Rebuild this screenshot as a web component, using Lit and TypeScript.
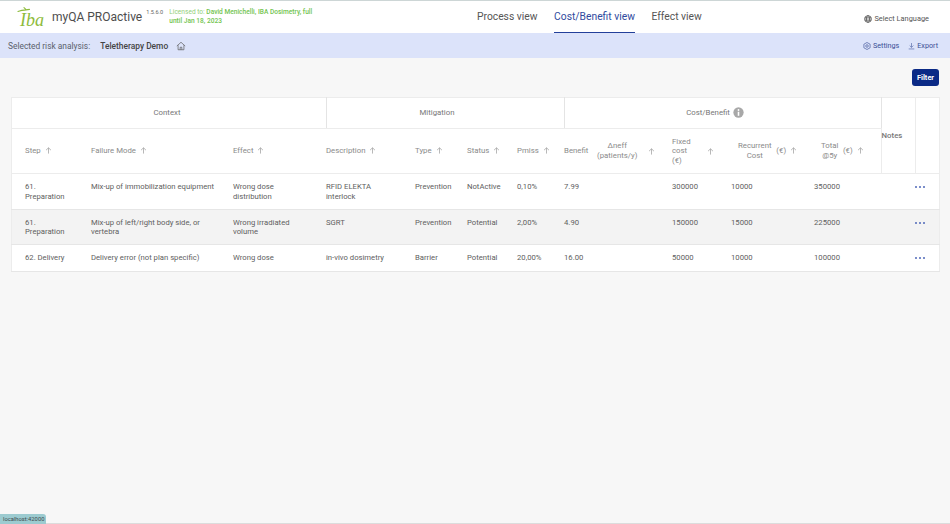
import { LitElement, html, css } from "lit";
import { customElement } from "lit/decorators.js";

const rows = [
  ["61. Preparation", "Mix-up of immobilization equipment", "Wrong dose distribution", "RFID ELEKTA interlock", "Prevention", "NotActive", "0,10%", "7.99", "", "300000", "10000", "350000"],
  ["61. Preparation", "Mix-up of left/right body side, or vertebra", "Wrong irradiated volume", "SGRT", "Prevention", "Potential", "2,00%", "4.90", "", "150000", "15000", "225000"],
  ["62. Delivery", "Delivery error (not plan specific)", "Wrong dose", "in-vivo dosimetry", "Barrier", "Potential", "20,00%", "16.00", "", "50000", "10000", "100000"],
];

const widths = [80, 142, 93, 89, 52, 50, 47, 33, 75, 59, 83, 67, 34, 24];

const arrow = html`<svg class="arrow" viewBox="0 0 8 8" width="7" height="7">
  <path d="M4 7.5V1M1.2 3.6 4 .9l2.8 2.7" fill="none" stroke="#9a9a9a" stroke-width=".8" />
</svg>`;

@customElement("app-root")
export class AppRoot extends LitElement {
  static styles = css`
    :host {
      display: block;
      position: relative;
      height: 524px;
      overflow: hidden;
      background: #f7f7f7;
      font-family: Roboto, sans-serif;
      color: #555;
    }

    .topbar {
      height: 33px;
      box-sizing: border-box;
      border-top: 1px solid #cdd6d6;
      background: #fff;
      display: flex;
      align-items: center;
      position: relative;
    }

    .logo {
      width: 28px;
      height: 24px;
      margin-left: 17px;
      flex: none;
    }

    .logo svg {
      display: block;
    }

    .logo text {
      font: italic 400 18px "Liberation Serif", serif;
      fill: #8dbb3c;
    }

    .brand {
      margin-left: 7px;
      font-size: 12px;
      color: #4d4d4d;
      white-space: nowrap;
    }

    .version {
      font-size: 5.6px;
      color: #666;
      margin: -11px 0 0 4px;
      white-space: nowrap;
    }

    .license {
      font-size: 6.6px;
      line-height: 9px;
      color: #93cf79;
      margin-left: 6px;
      width: 150px;
    }

    .license b {
      font-weight: 500;
      color: #72c44f;
    }

    .nav {
      position: absolute;
      left: 477px;
      top: 0;
      height: 33px;
      display: flex;
      gap: 16.6px;
    }

    .nav a {
      font-size: 10.3px;
      color: #555;
      line-height: 31px;
      height: 32px;
      box-sizing: border-box;
      white-space: nowrap;
    }

    .nav a.active {
      color: #2f4a9e;
      border-bottom: 1.5px solid #23409a;
    }

    .lang {
      position: absolute;
      right: 21px;
      top: 13px;
      font-size: 7.4px;
      color: #555;
      display: flex;
      align-items: center;
      gap: 2px;
    }

    .subbar {
      height: 25px;
      background: #dce3fa;
      display: flex;
      align-items: center;
      padding: 0 12px 0 8px;
      font-size: 8.4px;
      color: #5a5f6b;
    }

    .subbar .name {
      margin-left: 10px;
      font-weight: 500;
      color: #444;
    }

    .subbar .home {
      margin-left: 8px;
      display: block;
    }

    .spacer {
      flex: 1;
    }

    .action {
      display: flex;
      align-items: center;
      gap: 2px;
      font-size: 7.2px;
      color: #3a4f96;
      margin-left: 9px;
    }

    .toolbar {
      display: flex;
      justify-content: flex-end;
      padding: 11px 11px 11px 0;
    }

    .filter {
      width: 27px;
      height: 17px;
      border: none;
      border-radius: 3px;
      background: #0b2a86;
      color: #fff;
      font: 700 7.4px Roboto, sans-serif;
      padding: 0;
    }

    .table-wrap {
      margin: 0 10.5px;
    }

    table {
      width: 928px;
      table-layout: fixed;
      border-collapse: collapse;
      border: 1px solid #ececec;
      background: #fff;
      font-size: 7.7px;
      line-height: 9.6px;
    }

    td,
    th {
      padding: 0;
      font-weight: 400;
    }

    .group th {
      height: 30px;
      text-align: center;
      color: #777;
      font-size: 7.8px;
      border-bottom: 1px solid #ececec;
      border-right: 1px solid #e4e4e4;
    }

    .group .context {
      padding-right: 3px;
    }

    .group .mitigation {
      padding-right: 16px;
    }

    .group .cost {
      padding-right: 15px;
    }

    .info {
      display: inline-block;
      vertical-align: middle;
      margin-left: 1px;
      margin-top: -2px;
    }

    .heads th {
      height: 44px;
      text-align: left;
      color: #8a8a8a;
      font-size: 7.8px;
      border-bottom: 1px solid #ececec;
    }

    .heads .first,
    tbody .first {
      padding-left: 13.5px;
    }

    .arrow {
      margin-left: 2px;
      vertical-align: -1px;
    }

    .split {
      display: flex;
      align-items: center;
      justify-content: space-between;
      padding-right: 17px;
    }

    .center {
      text-align: center;
    }

    .shift {
      margin-left: 7px;
    }

    .group .notes-head {
      border-left: 1px solid #ececec;
      border-right: 1px solid #ececec;
      border-bottom: 1px solid #ececec;
      vertical-align: top;
      text-align: left;
      font-weight: 500;
      color: #777;
    }

    .notes-label {
      display: block;
      margin-top: 33px;
    }

    .group .menu-head {
      border-right: none;
    }

    tbody td {
      vertical-align: top;
      padding-top: 8px;
      color: #606060;
      border-bottom: 1px solid #e6e6e6;
      padding-right: 8px;
    }

    tbody td:nth-child(-n + 4) {
      padding-right: 16px;
    }

    tbody tr {
      height: 35.5px;
    }

    tbody tr:nth-child(2) {
      background: #f3f3f3;
    }

    tbody tr:last-child {
      height: 26.5px;
    }

    .dots {
      display: flex;
      gap: 1.8px;
      margin-top: 4px;
    }

    .dots i {
      width: 2.2px;
      height: 2.2px;
      border-radius: 50%;
      background: #4f69b8;
    }

    .status {
      position: absolute;
      left: 0;
      bottom: 0;
      height: 10px;
      width: 46px;
      box-sizing: border-box;
      padding-left: 3px;
      background: #9ccbd0;
      border-top-right-radius: 3px;
      font-size: 5.8px;
      line-height: 10px;
      color: #3c4a4c;
    }

    .edge {
      position: absolute;
      left: 46px;
      right: 0;
      bottom: 0;
      height: 1px;
      background: #dcdcdc;
    }
  `;

  private renderLogo() {
    return html`<svg viewBox="0 0 28 24" width="28" height="24">
      <text x="3" y="21">Iba</text>
      <path
        d="M1 6.5C4 5.2 7 5 12.5 4.4M7 2.6 9.4 4.8"
        fill="none"
        stroke="#8dbb3c"
        stroke-width="1.1"
        stroke-linecap="round"
      />
    </svg>`;
  }

  render() {
    return html`
      <div class="topbar">
        <div class="logo">${this.renderLogo()}</div>
        <span class="brand">myQA PROactive</span>
        <span class="version">1.5.6.0</span>
        <div class="license">
          Licensed to: <b>David Menichelli, IBA Dosimetry, full</b><br />
          <b>until Jan 18, 2023</b>
        </div>
        <nav class="nav">
          <a>Process view</a>
          <a class="active">Cost/Benefit view</a>
          <a>Effect view</a>
        </nav>
        <div class="lang">
          <svg viewBox="0 0 10 10" width="8" height="8">
            <g fill="none" stroke="#444" stroke-width=".9">
              <circle cx="5" cy="5" r="4.2" />
              <ellipse cx="5" cy="5" rx="1.9" ry="4.2" />
              <path d="M.8 3.6h8.4M.8 6.4h8.4" />
            </g>
          </svg>
          Select Language
        </div>
      </div>

      <div class="subbar">
        <span>Selected risk analysis:</span>
        <span class="name">Teletherapy Demo</span>
        <svg class="home" viewBox="0 0 12 12" width="10" height="10">
          <path d="M1 6 6 1.5 11 6M2.5 5v5.5h7V5M5 10.5V7.5h2v3" fill="none" stroke="#555" stroke-width=".8" />
        </svg>
        <span class="spacer"></span>
        <span class="action">
          <svg viewBox="0 0 10 10" width="8" height="8">
            <g fill="none" stroke="#3a4f96" stroke-width=".8">
              <path d="M5 .6 8.9 2.8v4.4L5 9.4 1.1 7.2V2.8z" />
              <circle cx="5" cy="5" r="1.6" />
            </g>
          </svg>
          Settings
        </span>
        <span class="action">
          <svg viewBox="0 0 10 10" width="7" height="8">
            <path d="M5 .8v6M2.4 4.4 5 7l2.6-2.6M1 9.2h8" fill="none" stroke="#3a4f96" stroke-width=".8" />
          </svg>
          Export
        </span>
      </div>

      <div class="toolbar"><button class="filter">Filter</button></div>

      <div class="table-wrap">
        <table>
          <colgroup>
            ${widths.map((w) => html`<col style="width:${w}px" />`)}
          </colgroup>
          <thead>
            <tr class="group">
              <th class="context" colspan="3">Context</th>
              <th class="mitigation" colspan="4">Mitigation</th>
              <th class="cost" colspan="5">
                Cost/Benefit
                <svg class="info" viewBox="0 0 12 12" width="11" height="11">
                  <circle cx="6" cy="6" r="5.6" fill="#a8a8a8" />
                  <circle cx="6" cy="3.3" r="1" fill="#fff" />
                  <path d="M6 5.2v4.4" stroke="#fff" stroke-width="1.7" />
                </svg>
              </th>
              <th class="notes-head" rowspan="2"><span class="notes-label">Notes</span></th>
              <th class="notes-head menu-head" rowspan="2"></th>
            </tr>
            <tr class="heads">
              <th class="first">Step ${arrow}</th>
              <th>Failure Mode ${arrow}</th>
              <th>Effect ${arrow}</th>
              <th>Description ${arrow}</th>
              <th>Type ${arrow}</th>
              <th>Status ${arrow}</th>
              <th>Pmiss ${arrow}</th>
              <th>Benefit</th>
              <th>
                <div class="split"><span class="center">Δneff<br />(patients/y)</span>${arrow}</div>
              </th>
              <th>
                <div class="split"><span>Fixed<br />cost<br />(€)</span>${arrow}</div>
              </th>
              <th>
                <div class="split"><span class="center shift">Recurrent<br />Cost</span><span>(€) ${arrow}</span></div>
              </th>
              <th>
                <div class="split"><span class="center shift">Total<br />@5y</span><span>(€) ${arrow}</span></div>
              </th>
            </tr>
          </thead>
          <tbody>
            ${rows.map(
              (r) => html`<tr>
                ${r.map((c, i) => html`<td class=${i === 0 ? "first" : ""}>${c}</td>`)}
                <td></td>
                <td><div class="dots"><i></i><i></i><i></i></div></td>
              </tr>`
            )}
          </tbody>
        </table>
      </div>

      <div class="status">localhost:42000</div>
      <div class="edge"></div>
    `;
  }
}
